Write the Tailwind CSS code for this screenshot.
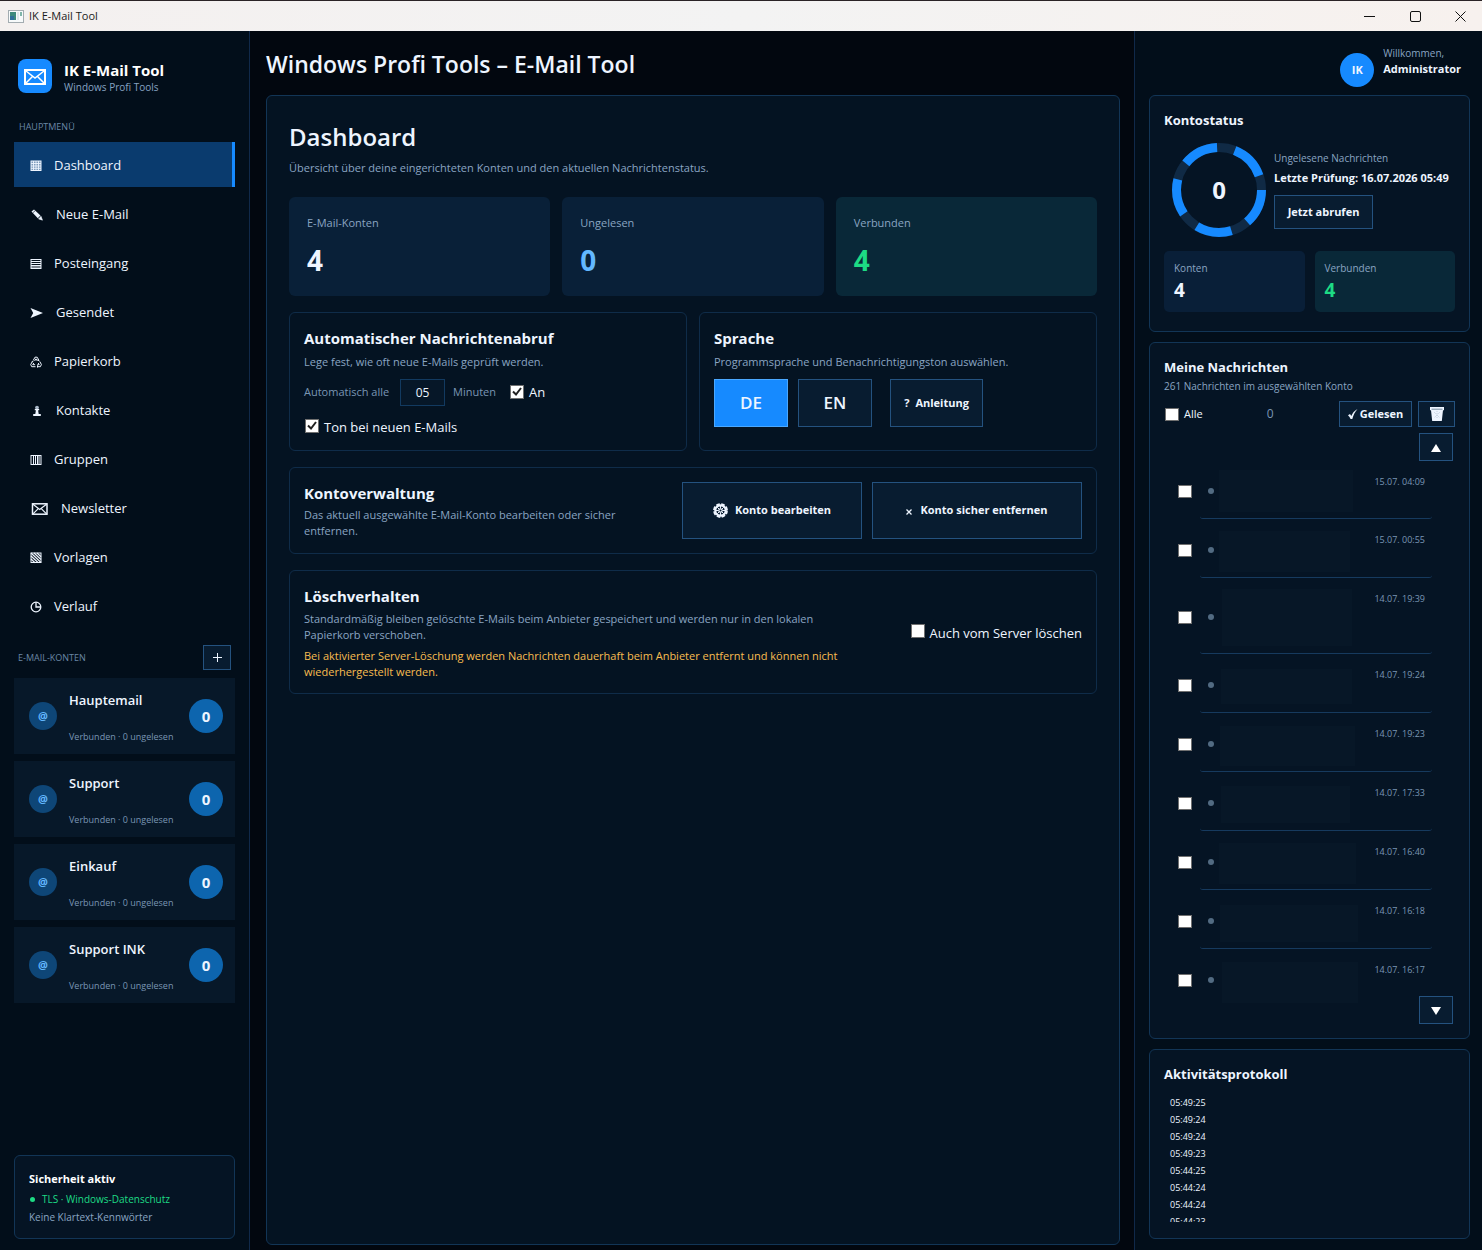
<!DOCTYPE html>
<html lang="de">
<head>
  <meta charset="UTF-8">
  <meta name="viewport" content="width=device-width, initial-scale=1.0">
  <title>IK E-Mail Tool</title>
  <script src="https://cdn.jsdelivr.net/npm/@tailwindcss/browser@4"></script>
</head>
<body class="min-h-screen flex flex-col bg-[#02070f] font-['Open_Sans',sans-serif] text-[12px] text-[#eef5ff]">

  <!-- Title Bar -->
  <header class="h-[31px] border-t border-[#2a2326] bg-linear-to-r from-[#f4f0ef] via-[#f3f3f3] to-[#f7f1ee] flex items-center text-[#1b1b1b] shrink-0">
    <svg class="ml-2 w-4 h-[13px]" viewBox="0 0 16 13"><rect x=".5" y=".5" width="15" height="12" fill="#f7fafb" stroke="#a3acb1"/><rect x="2" y="2" width="6" height="8" fill="#3c8a7d"/><rect x="2" y="6" width="4" height="4" fill="#2e6f9a"/><rect x="9" y="2" width="2" height="8" fill="#dde7ea"/><rect x="12" y="2" width="2" height="4" fill="#7fb5a9"/></svg>
    <span class="ml-[5px] text-[11px]">IK E-Mail Tool</span>
    <div class="ml-auto flex h-full">
      <button aria-label="Minimieren" class="w-[46px] grid place-items-center"><svg class="w-[11px] h-[11px]" viewBox="0 0 11 11" stroke="#111"><path d="M0 5.5h11"/></svg></button>
      <button aria-label="Maximieren" class="w-[46px] grid place-items-center"><svg class="w-[11px] h-[11px]" viewBox="0 0 11 11" stroke="#111" fill="none"><rect x=".5" y=".5" width="10" height="10" rx="1.5"/></svg></button>
      <button aria-label="Schließen" class="w-[44px] grid place-items-center"><svg class="w-[11px] h-[11px]" viewBox="0 0 11 11" stroke="#111" fill="none"><path d="M.5.5l10 10M10.5.5l-10 10"/></svg></button>
    </div>
  </header>

  <div class="flex-1 grid grid-cols-[250px_1fr_348px]">

    <!-- Sidebar Section -->
    <aside class="bg-[#020e1a] border-r border-[#10294a] px-3.5 pt-7 pb-[11px] flex flex-col">
      <div class="flex items-start gap-3 pl-1">
        <div class="size-[34px] rounded-lg bg-[#168aff] grid place-items-center">
          <svg class="mt-0.5 w-[22px] h-[16px]" viewBox="0 0 22 16" fill="none" stroke="#fff" stroke-width="2"><rect x="1" y="1" width="20" height="14"/><path d="M2 2l9 7 9-7M2 14l6.500-6.500M20 14l-6.500-6.500" stroke-width="1.500"/></svg>
        </div>
        <div class="pt-0.5">
          <h1 class="text-[15px] leading-[18px] font-bold text-white">IK E-Mail Tool</h1>
          <p class="text-[10px] leading-4 text-[#86a3c2]">Windows Profi Tools</p>
        </div>
      </div>

      <h2 class="mt-6 pl-[5px] text-[9px] leading-4 text-[#6a87a5]">HAUPTMENÜ</h2>
      <nav id="mainNav" class="mt-[7px] flex flex-col gap-1"></nav>

      <div class="mt-[17px] px-1 flex items-center justify-between">
        <h2 class="text-[9px] leading-4 text-[#6a87a5]">E-MAIL-KONTEN</h2>
        <button aria-label="Konto hinzufügen" class="w-7 h-[25px] border border-[#24527f] bg-[#081c30] grid place-items-center"><svg class="w-[9px] h-[9px]" viewBox="0 0 9 9" stroke="#eef5ff"><path d="M0 4.500h9M4.500 0v9"/></svg></button>
      </div>
      <div id="accountList" class="mt-2 mb-4 flex flex-col gap-[7px]"></div>

      <section class="mt-auto rounded-md border border-[#123556] bg-[#051424] px-3.5 pt-3.5 pb-3">
        <h2 class="font-bold text-[11px] leading-[18px] text-white">Sicherheit aktiv</h2>
        <p class="mt-0.5 flex items-center gap-[7px] text-[10px] leading-[18px] text-[#1ddb84]"><span class="size-[5px] ml-px rounded-full bg-[#1ddb84]"></span>TLS · Windows-Datenschutz</p>
        <p class="text-[10px] leading-[18px] text-[#8aa5c2]">Keine Klartext-Kennwörter</p>
      </section>
    </aside>

    <!-- Main Content Section -->
    <main class="pl-4 pr-3.5 pb-[5px] flex flex-col">
      <h1 class="h-16 leading-[66px] text-[23px] font-semibold">Windows Profi Tools – E-Mail Tool</h1>

      <div class="flex-1 rounded-md border border-[#123556] bg-[#041322] px-[22px] pt-[22px] pb-6">
        <h2 class="text-[24px] leading-[38px] font-semibold">Dashboard</h2>
        <p class="mt-[3px] leading-[18px] text-[11px] text-[#8aa5c2]">Übersicht über deine eingerichteten Konten und den aktuellen Nachrichtenstatus.</p>

        <div class="mt-5 grid grid-cols-3 gap-3">
          <div class="rounded-md bg-[#092038] px-[18px] py-[17px]">
            <p class="text-[11px] leading-[18px] text-[#8aa5c2]">E-Mail-Konten</p>
            <p class="mt-2.5 mb-px text-[28px] leading-9 font-bold">4</p>
          </div>
          <div class="rounded-md bg-[#092038] px-[18px] py-[17px]">
            <p class="text-[11px] leading-[18px] text-[#8aa5c2]">Ungelesen</p>
            <p class="mt-2.5 mb-px text-[28px] leading-9 font-bold text-[#63b8ff]">0</p>
          </div>
          <div class="rounded-md bg-[#092838] px-[18px] py-[17px]">
            <p class="text-[11px] leading-[18px] text-[#8aa5c2]">Verbunden</p>
            <p class="mt-2.5 mb-px text-[28px] leading-9 font-bold text-[#1ddb84]">4</p>
          </div>
        </div>

        <div class="mt-4 grid grid-cols-2 gap-3">
          <section class="rounded-md border border-[#0f2c49] p-3.5 pb-[13px]">
            <h3 class="text-[15px] leading-[23px] font-bold">Automatischer Nachrichtenabruf</h3>
            <p class="mt-0.5 leading-5 text-[11px] text-[#8aa5c2]">Lege fest, wie oft neue E-Mails geprüft werden.</p>
            <div class="mt-[7px] flex items-center gap-2">
              <label for="interval" class="w-[88px] text-[11px] text-[#7a96b4]">Automatisch alle</label>
              <input id="interval" type="text" value="05" class="w-[45px] h-[27px] border border-[#123a60] bg-[#061728] text-center text-[12px]">
              <span class="text-[11px] text-[#7a96b4]">Minuten</span>
              <label class="ml-1.5 flex items-center gap-[5px] text-[13px]">
                <span class="grid mb-0.5">
                  <input type="checkbox" checked class="peer col-start-1 row-start-1 appearance-none size-3.5 bg-white border border-[#707070]">
                  <svg class="hidden peer-checked:block col-start-1 row-start-1 size-3.5 pointer-events-none" viewBox="0 0 14 14" fill="none" stroke="#212121" stroke-width="2"><path d="M3 6.500L6 9.500L11 3"/></svg>
                </span>
                An
              </label>
            </div>
            <label class="mt-[11px] pl-px flex items-center gap-[5px] text-[13px] leading-5">
              <span class="grid mb-0.5">
                <input type="checkbox" checked class="peer col-start-1 row-start-1 appearance-none size-3.5 bg-white border border-[#707070]">
                <svg class="hidden peer-checked:block col-start-1 row-start-1 size-3.5 pointer-events-none" viewBox="0 0 14 14" fill="none" stroke="#212121" stroke-width="2"><path d="M3 6.500L6 9.500L11 3"/></svg>
              </span>
              Ton bei neuen E-Mails
            </label>
          </section>

          <section class="rounded-md border border-[#0f2c49] p-3.5 pb-[13px]">
            <h3 class="text-[15px] leading-[23px] font-bold">Sprache</h3>
            <p class="mt-0.5 leading-5 text-[11px] text-[#8aa5c2]">Programmsprache und Benachrichtigungston auswählen.</p>
            <div class="mt-[7px] flex">
              <button class="w-[74px] h-12 border border-[#4aa8ff] bg-[#168aff] text-[17px] font-semibold">DE</button>
              <button class="ml-2.5 w-[74px] h-12 border border-[#24527f] bg-[#081c30] text-[17px] font-semibold">EN</button>
              <button class="ml-[18px] w-[93px] h-12 border border-[#24527f] bg-[#081c30] text-[11px] font-bold flex items-center justify-center gap-1.5"><span>?</span>Anleitung</button>
            </div>
          </section>
        </div>

        <section class="mt-4 rounded-md border border-[#0f2c49] p-3.5 flex gap-2.5">
          <div class="flex-1">
            <h3 class="text-[15px] leading-[23px] font-bold">Kontoverwaltung</h3>
            <p class="mt-0.5 leading-4 text-[11px] text-[#8aa5c2]">Das aktuell ausgewählte E-Mail-Konto bearbeiten oder sicher entfernen.</p>
          </div>
          <button class="w-[180px] h-[57px] border border-[#24527f] bg-[#081c30] text-[11px] font-bold flex items-center justify-center gap-[7px]">
            <svg class="size-[15px]" viewBox="0 0 15 15" fill="none" stroke="#eef5ff"><circle cx="7.500" cy="7.500" r="5.200" stroke-width="2.200"/><circle cx="7.500" cy="7.500" r="6.500" stroke-width="1.800" stroke-dasharray="3.600 1.500"/><circle cx="7.500" cy="7.500" r="1.700" stroke-width="1.200"/><path d="M7.500 3v2.500M7.500 9.500V12M3 7.500h2.500M9.500 7.500H12M4.300 4.300L6 6M9 9l1.700 1.700M10.700 4.300L9 6M6 9l-1.700 1.700" stroke-width="1"/></svg>
            Konto bearbeiten
          </button>
          <button class="w-[210px] h-[57px] border border-[#24527f] bg-[#081c30] text-[11px] font-bold flex items-center justify-center gap-2">
            <svg class="mt-0.5 size-[6px]" viewBox="0 0 6 6" stroke="#eef5ff" stroke-width="1.300"><path d="M.5.5l5 5M5.500.5l-5 5"/></svg>
            Konto sicher entfernen
          </button>
        </section>

        <section class="mt-4 rounded-md border border-[#0f2c49] px-3.5 pt-3.5 pb-[13px] flex items-center justify-between gap-6">
          <div class="max-w-[560px]">
            <h3 class="text-[15px] leading-[23px] font-bold">Löschverhalten</h3>
            <p class="mt-[3px] leading-4 text-[11px] text-[#8aa5c2]">Standardmäßig bleiben gelöschte E-Mails beim Anbieter gespeichert und werden nur in den lokalen Papierkorb verschoben.</p>
            <p class="mt-[5px] leading-4 text-[11px] text-[#f8bd50]">Bei aktivierter Server-Löschung werden Nachrichten dauerhaft beim Anbieter entfernt und können nicht wiederhergestellt werden.</p>
          </div>
          <label class="flex items-center gap-[5px] text-[13px] leading-5 whitespace-nowrap">
            <input type="checkbox" class="mb-1 appearance-none size-3.5 bg-white border border-[#707070]">
            Auch vom Server löschen
          </label>
        </section>
      </div>
    </main>

    <!-- Right Column -->
    <aside class="bg-[#020e1a] border-l border-[#10294a] pl-3.5 pr-3 pb-[11px] flex flex-col">
      <div class="h-16 pr-[9px] flex justify-end gap-[9px]">
        <div class="mt-[22px] size-[34px] rounded-full bg-[#168aff] grid place-items-center text-[11px] font-bold">IK</div>
        <div class="pt-3.5">
          <p class="text-[10px] leading-4 text-[#8aa5c2]">Willkommen,</p>
          <p class="text-[11px] leading-4 font-bold">Administrator</p>
        </div>
      </div>

      <!-- Account Status -->
      <section class="rounded-md border border-[#123556] bg-[#051424] px-3.5 pt-3.5 pb-[19px]">
        <h2 class="text-[13px] leading-5 font-bold">Kontostatus</h2>
        <div class="mt-[13px] pl-2 flex items-center gap-2">
          <div class="grid place-items-center size-[94px]">
            <svg class="col-start-1 row-start-1 size-[94px]" viewBox="0 0 94 94" fill="none" stroke-width="9"><circle cx="47" cy="47" r="42.500" stroke="#102a45"/><circle cx="47" cy="47" r="42.500" stroke="#168aff" stroke-dasharray="36 18"/></svg>
            <span class="col-start-1 row-start-1 text-[24px] font-bold">0</span>
          </div>
          <div class="pb-px">
            <p class="text-[10px] leading-4 text-[#8aa5c2]">Ungelesene Nachrichten</p>
            <p class="mt-0.5 text-[11px] leading-5 font-bold whitespace-nowrap">Letzte Prüfung: 16.07.2026 05:49</p>
            <button class="mt-[7px] w-[99px] h-[34px] border border-[#24527f] bg-[#081c30] text-[11px] font-bold">Jetzt abrufen</button>
          </div>
        </div>
        <div class="mt-3.5 grid grid-cols-2 gap-2.5">
          <div class="rounded-[5px] bg-[#091f38] px-2.5 pt-[9px] pb-2.5">
            <p class="text-[10px] leading-4 text-[#8aa5c2]">Konten</p>
            <p class="mt-0.5 text-[19px] leading-6 font-bold">4</p>
          </div>
          <div class="rounded-[5px] bg-[#092838] px-2.5 pt-[9px] pb-2.5">
            <p class="text-[10px] leading-4 text-[#8aa5c2]">Verbunden</p>
            <p class="mt-0.5 text-[19px] leading-6 font-bold text-[#1ddb84]">4</p>
          </div>
        </div>
      </section>

      <!-- Messages -->
      <section class="mt-2.5 rounded-md border border-[#123556] bg-[#051424] p-3.5">
        <h2 class="text-[13px] leading-5 font-bold">Meine Nachrichten</h2>
        <p class="text-[10px] leading-[18px] text-[#8aa5c2]">261 Nachrichten im ausgewählten Konto</p>
        <div class="mt-1.5 flex items-center">
          <label class="pl-px flex items-center gap-[5px] text-[11px]">
            <input type="checkbox" class="appearance-none w-3.5 h-[13px] bg-white border border-[#707070]">
            Alle
          </label>
          <span class="ml-16 text-[#7a96b4]">0</span>
          <button class="ml-auto w-[73px] h-[26px] border border-[#24527f] bg-[#081c30] text-[11px] font-bold flex items-center justify-center gap-0.5">
            <svg class="w-2.5 h-2.5" viewBox="0 0 10 10" fill="#eef5ff"><path d="M0 6.200L2 5l1.300 2C4.500 4 6.300 1.700 9.500 0 7 2.800 5.300 6 4.300 10H2.600C2 8.500 1.200 7.300 0 6.200z"/></svg>
            Gelesen
          </button>
          <button aria-label="Löschen" class="ml-1.5 w-[37px] h-[26px] border border-[#24527f] bg-[#081c30] grid place-items-center">
            <svg class="w-3.5 h-[14px]" viewBox="0 0 14 14" fill="#eef5ff"><path d="M0 0h14v3.200h-1L11.800 14H2.200L1 3.200H0z"/><path d="M1.500 2.200h11" stroke="#5b7186" stroke-width=".8"/><path d="M4 5l6 6M10 5l-6 6M7 4v8" stroke="#b9c8d8" stroke-width=".8" stroke-dasharray="1 1"/></svg>
          </button>
        </div>
        <div class="mt-1.5 pr-0.5 flex justify-end">
          <button aria-label="Nach oben" class="w-[34px] h-7 border border-[#24527f] bg-[#081c30] grid place-items-center"><svg class="mt-0.5 w-2.5 h-2" viewBox="0 0 10 8" fill="#fff"><path d="M5 0l5 8H0z"/></svg></button>
        </div>
        <ul id="messageList"></ul>
        <div class="pr-0.5 flex justify-end">
          <button aria-label="Nach unten" class="w-[34px] h-7 border border-[#24527f] bg-[#081c30] grid place-items-center"><svg class="mt-0.5 w-2.5 h-2" viewBox="0 0 10 8" fill="#fff"><path d="M5 8L0 0h10z"/></svg></button>
        </div>
      </section>

      <!-- Activity Log -->
      <section class="mt-2.5 flex-1 rounded-md border border-[#123556] bg-[#051424] p-3.5">
        <h2 class="text-[13px] leading-5 font-bold">Aktivitätsprotokoll</h2>
        <ul id="activityLog" class="mt-2.5 pl-1.5 h-32 overflow-hidden text-[9px] leading-[17px] font-medium"></ul>
      </section>
    </aside>
  </div>

  <!-- JavaScript -->
  <script>
    const navItems = [
      { text: 'Dashboard', active: true, icon: '<svg class="w-3 h-3" viewBox="0 0 12 12" fill="none" stroke="#eef5ff"><rect x="1" y="1" width="10" height="9.500" fill="#7d9bbb"/><path d="M3.500 1v10M6 1v10M8.500 1v10M1 3.500h10M1 6h10M1 8.300h10" stroke-width=".9"/></svg>' },
      { text: 'Neue E-Mail', icon: '<svg class="w-3.5 h-3" viewBox="0 0 14 12" fill="#eef5ff"><path d="M1.500 2.500L4 .5l6.500 6-2.700 2.800z"/><path d="M11 7.200l1.500 4-4-1.300z" stroke="#eef5ff" stroke-width=".5"/><path d="M2.800 3.800l2.300-2" stroke="#020e1a" stroke-width=".6"/></svg>' },
      { text: 'Posteingang', icon: '<svg class="w-3 h-3" viewBox="0 0 12 12" fill="none" stroke="#eef5ff"><rect x="1" y="1.500" width="10" height="9"/><path d="M1 3.500h10M1 5.500h10M1 7.500h10M1 9h10"/></svg>' },
      { text: 'Gesendet', icon: '<svg class="w-3.5 h-3" viewBox="0 0 14 12" fill="#eef5ff"><path d="M.5 1L13 6 .5 11l2.700-5z"/></svg>' },
      { text: 'Papierkorb', icon: '<svg class="w-3 h-3" viewBox="0 0 12 12" fill="none" stroke="#eef5ff" stroke-width="1"><path d="M3.200 4.500L5 1.200h2.200l1.800 3.300M9.800 5.500l1.600 3-1 2.200H7M5.500 10.700H1.700l-1-2.200 1.700-3M4.600 5L6 2.800 7.400 5M8.200 7l1 1.700H7.300M3.800 7L2.700 8.700h2.400M7.500 3.700L9.200 5M7.500 9.300v2.200M1.600 6l1.700-.6"/></svg>' },
      { text: 'Kontakte', icon: '<svg class="w-3.5 h-3" viewBox="0 0 14 12" fill="#eef5ff"><circle cx="7" cy="2.600" r="1.900" fill="#a9b8c8"/><path d="M4.800 4h4.400v1.200H8.100L8.700 9h2.100v2H3.200V9h2.100l.6-3.800H4.800z"/></svg>' },
      { text: 'Gruppen', icon: '<svg class="w-3 h-3" viewBox="0 0 12 12" fill="none" stroke="#eef5ff"><rect x="1" y="1.500" width="10" height="9"/><path d="M3.500 1v10M5.500 1v10M7.500 1v10M9 1v10"/></svg>' },
      { text: 'Newsletter', icon: '<svg class="w-[19px] h-3" viewBox="0 0 19 12" fill="none" stroke="#eef5ff"><rect x="2.500" y=".8" width="14.500" height="10.400" stroke-width="1.500"/><path d="M3 1.200l6.700 5.300L16.500 1.200M3 10.800l5-5M16.500 10.800l-5-5" stroke-width="1.200"/></svg>' },
      { text: 'Vorlagen', icon: '<svg class="w-3 h-3" viewBox="0 0 12 12" fill="none" stroke="#eef5ff"><rect x="1" y="1" width="10" height="9.500"/><path d="M1 1l10 9.500M4 1l7 6.500M7 1l4 3.700M1 4l7 6.500M1 7l4 3.700" stroke-width="1.200"/></svg>' },
      { text: 'Verlauf', icon: '<svg class="w-3 h-3" viewBox="0 0 12 12" fill="none" stroke="#eef5ff" stroke-width="1.300"><circle cx="6" cy="6" r="4.800"/><path d="M6 1.200V6h4.500"/></svg>' }
    ];

    const accounts = ['Hauptemail', 'Support', 'Einkauf', 'Support INK'];

    // row = row height, x / y / w / h = preview area inside the row
    const messages = [
      { date: '15.07. 04:09', row: 58, x: 3, y: 9, w: 134, h: 42 },
      { date: '15.07. 00:55', row: 59, x: 3, y: 12, w: 131, h: 41 },
      { date: '14.07. 19:39', row: 76, x: 6, y: 11, w: 130, h: 57 },
      { date: '14.07. 19:24', row: 59, x: 5, y: 15, w: 131, h: 35 },
      { date: '14.07. 19:23', row: 59, x: 4, y: 13, w: 135, h: 40 },
      { date: '14.07. 17:33', row: 59, x: 5, y: 14, w: 129, h: 37 },
      { date: '14.07. 16:40', row: 59, x: 3, y: 12, w: 137, h: 41 },
      { date: '14.07. 16:18', row: 59, x: 4, y: 15, w: 138, h: 37 },
      { date: '14.07. 16:17', row: 47, x: 6, y: 13, w: 136, h: 41, last: true }
    ];

    const logTimes = ['05:49:25', '05:49:24', '05:49:24', '05:49:23', '05:44:25', '05:44:24', '05:44:24', '05:44:23'];

    function renderNav() {
      document.getElementById('mainNav').innerHTML = navItems.map(item => `
        <a href="#" class="h-[45px] pl-4 pt-[3px] flex items-center gap-3 text-[13px] ${item.active ? 'bg-[#0a3b6e] border-r-3 border-[#168aff]' : ''}">
          ${item.icon}<span>${item.text}</span>
        </a>
      `).join('');
    }

    function renderAccounts() {
      document.getElementById('accountList').innerHTML = accounts.map(name => `
        <button class="h-19 bg-[#071829] pl-[15px] pr-3 flex items-center text-left">
          <span class="size-7 rounded-full bg-[#0e4677] text-[#63b8ff] text-[11px] font-bold grid place-items-center">@</span>
          <span class="ml-3 pt-[3px]">
            <span class="block text-[13px] leading-5 font-semibold">${name}</span>
            <span class="block mt-[19px] text-[9px] leading-4 text-[#7a96b4]">Verbunden · 0 ungelesen</span>
          </span>
          <span class="ml-auto size-[34px] rounded-full bg-[#0d65ae] text-[15px] font-bold grid place-items-center">0</span>
        </button>
      `).join('');
    }

    function renderMessages() {
      document.getElementById('messageList').innerHTML = messages.map(m => `
        <li class="flex pl-3.5" style="height:${m.row}px">
          <input type="checkbox" aria-label="Nachricht vom ${m.date}" class="appearance-none w-3.5 h-[13px] bg-white border border-[#707070] ${m.last ? 'mt-[25px]' : 'self-center mt-[3px]'}">
          <div class="ml-2 mr-[23px] flex-1 flex items-start rounded-[3px] ${m.last ? '' : 'border-b border-[#163a5e]'}">
            <span class="ml-2 size-1.5 rounded-full bg-[#526b82] ${m.last ? 'mt-7' : 'self-center mt-[3px]'}"></span>
            <span class="bg-[#071727]" style="margin-left:${m.x + 2}px;margin-top:${m.y}px;width:${m.w}px;height:${m.h}px"></span>
            <time class="ml-auto mr-[7px] mt-[13px] text-[9px] leading-4 text-[#7a96b4]">${m.date}</time>
          </div>
        </li>
      `).join('');
    }

    function renderLog() {
      document.getElementById('activityLog').innerHTML = logTimes.map(t => `<li>${t}</li>`).join('');
    }

    // Initial loading
    document.addEventListener("DOMContentLoaded", () => {
      renderNav();
      renderAccounts();
      renderMessages();
      renderLog();
    });
  </script>
</body>
</html>
